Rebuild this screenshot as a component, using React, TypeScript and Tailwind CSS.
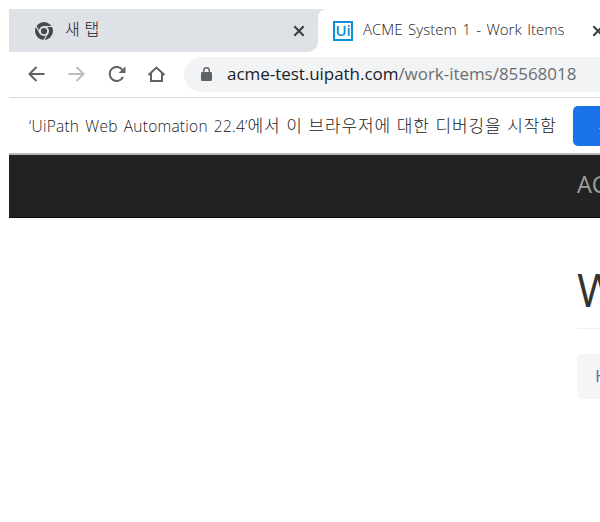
import React from 'react';

const latin = "font-['Open_Sans','Noto_Sans_CJK_KR',sans-serif]";

function ChromeIcon() {
  return (
    <svg className="h-[18px] w-[18px] shrink-0" viewBox="0 0 18 18">
      <circle cx="9" cy="9" r="9" fill="#43484c" />
      <circle cx="9" cy="9" r="4.1" fill="#43484c" stroke="#dee1e6" strokeWidth="2" />
      <g stroke="#dee1e6" strokeWidth="1.1">
        <path d="M9 4.500H17.200" />
        <path d="M5.100 11.200L1 4.100" />
        <path d="M12.900 11.200L8.800 18.300" />
      </g>
    </svg>
  );
}

function CloseIcon() {
  return (
    <svg className="h-[12px] w-[12px] shrink-0" viewBox="0 0 12 12" fill="none" stroke="#3c4043" strokeWidth="2.1">
      <path d="M1.3 1.3L10.7 10.7M10.7 1.3L1.3 10.7" />
    </svg>
  );
}

function UiPathIcon() {
  return (
    <div className="flex h-5 w-5 shrink-0 items-center justify-center border-2 border-[#0d8fd6] bg-white">
      <span className="font-['Open_Sans',sans-serif] text-[15px] leading-none font-semibold tracking-[-0.2px] text-[#0d8fd6]">Ui</span>
    </div>
  );
}

function Tabs() {
  return (
    <div className="flex h-[43px] shrink-0 bg-white">
      <div className="flex w-[309px] shrink-0 items-center rounded-br-[10px] bg-[#dee1e6] pr-[13px] pl-[26px]">
        <ChromeIcon />
        <span className="ml-3 pb-[3px] text-[16px] font-light [word-spacing:0.500px] text-[#202124]">새 탭</span>
        <span className="ml-auto"><CloseIcon /></span>
      </div>
      <div className="relative flex w-[300px] shrink-0 items-center pl-[15px]">
        <svg className="absolute top-0 left-0 h-[10px] w-[10px]" viewBox="0 0 10 10">
          <path d="M0 0H10Q0 0 0 10Z" fill="#dee1e6" />
        </svg>
        <UiPathIcon />
        <span className="ml-[10px] w-[229px] shrink-0 pb-[2px] text-[15px] font-light tracking-[0.02px] [word-spacing:1.500px] text-[#202124]">ACME System 1 - Work Items</span>
        <CloseIcon />
      </div>
    </div>
  );
}

function Toolbar() {
  return (
    <div className="flex h-[46px] shrink-0 items-center border-b border-[#dadce0] bg-white pb-px pl-[19px]">
      <svg className="h-4 w-[140px] shrink-0" viewBox="0 0 140 16" fill="none" stroke="#5f6368" strokeWidth="2">
        <path d="M16.500 8H2M8.500 1L1.500 8L8.500 15" />
        <path d="M40.500 8H55M48.500 1L55.500 8L48.500 15" stroke="#babcbe" />
        <path d="M94.500 4A7 7 0 1 0 95 11" />
        <path d="M97.500 .5V7H90.500Z" fill="#5f6368" stroke="none" />
        <path d="M120.500 9L128.500 1.500L136.500 9M123 7V15H134V7" />
      </svg>
      <div className="ml-[16px] flex h-[35px] w-[460px] shrink-0 items-center rounded-l-full bg-[#f1f3f4] pl-[17px]">
        <svg className="h-[14px] w-[11px] shrink-0" viewBox="0 0 11 14">
          <path d="M2.800 6V3.500a2.700 2.700 0 0 1 5.400 0V6" fill="none" stroke="#5f6368" strokeWidth="1.400" />
          <rect y="5" width="11" height="9" rx="1.300" fill="#5f6368" />
        </svg>
        <span className="ml-[15px] text-[17px] tracking-[-0.04px] whitespace-nowrap text-[#202124]">
          acme-test.uipath.com<span className="text-[#6b6f73]">/work-items/85568018</span>
        </span>
      </div>
    </div>
  );
}

function DebugBar() {
  return (
    <div className="flex h-[57px] shrink-0 items-center border-b-2 border-[#b8b8b8] bg-white pt-px pl-5">
      <span className="w-[544px] shrink-0 text-[15.500px] font-light whitespace-nowrap text-[#202124]">
        <span className="tracking-[0.250px] [word-spacing:1.800px]">‘UiPath Web Automation 22.4’</span>
        <span className="text-[17px] tracking-[0.850px] [word-spacing:0.500px]">에서 이 브라우저에 대한 디버깅을 시작함</span>
      </span>
      <button className="h-10 w-20 shrink-0 rounded-[5px] bg-[#1a73e8] pr-[1px] text-[15px] text-white">취소</button>
    </div>
  );
}

export default function App() {
  return (
    <div className={`flex h-[522px] w-[600px] flex-col overflow-hidden bg-white pt-[9px] pl-[9px] ${latin}`}>
      <Tabs />
      <Toolbar />
      <DebugBar />
      <nav className="flex h-[63px] shrink-0 items-center border-b border-[#080808] bg-[#222] pb-[2px] pl-[568px]">
        <span className="text-[23.500px] whitespace-nowrap text-[#9d9d9d]">ACME System 1</span>
      </nav>
      <main className="w-[900px] pl-[568px]">
        <h1 className="mt-[42px] h-[69px] border-b border-[#eee] text-[45px] leading-[60px] whitespace-nowrap text-[#333]">Work Items</h1>
        <div className="mt-[25px] flex h-[45px] items-center rounded-[5px] bg-[#f5f5f5] pb-px pl-[18px] text-[17px] text-[#337ab7]">Home</div>
      </main>
    </div>
  );
}
